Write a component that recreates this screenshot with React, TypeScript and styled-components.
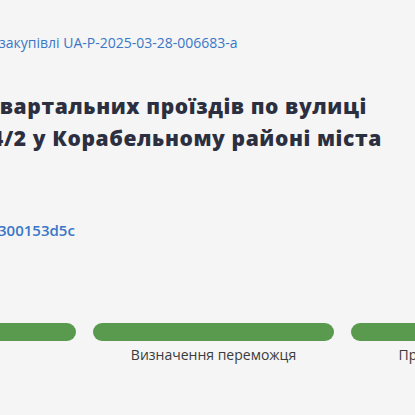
import styled, { createGlobalStyle } from "styled-components";

const GlobalStyle = createGlobalStyle`
  html, body {
    margin: 0;
    padding: 0;
    background: #f5f5f5;
  }
  body {
    font-family: "Open Sans", "Noto Sans", sans-serif;
    overflow: hidden;
  }
`;

// ==================== Styled Components ====================

const Page = styled.div`
  width: 415px;
  height: 415px;
  overflow: hidden;
  background: #f5f5f5;
  display: flex;
  flex-direction: column;
  padding-top: 33px;
  box-sizing: border-box;
`;

// a line of text whose start runs past the left edge of the view
const Line = styled.div<{ $shift: number }>`
  margin-left: ${({ $shift }) => $shift}px;
  white-space: nowrap;
`;

const TenderLink = styled.a`
  font-size: 14px;
  line-height: 20px;
  font-weight: 500;
  color: #3a77c6;
  text-decoration: none;
`;

const Title = styled.h1`
  margin: 37px 0 0;
  font-size: 21px;
  line-height: 32px;
  font-weight: 800;
  letter-spacing: 0.6px;
  color: #2c2f40;
`;

const Hash = styled.a`
  margin-top: 66px;
  font-size: 15px;
  line-height: 20px;
  font-weight: 600;
  color: #3a77c6;
  text-decoration: none;
`;

const Stepper = styled.div`
  margin-top: 83px;
  margin-left: -165px;
  display: flex;
  gap: 17px;
`;

const Step = styled.div`
  flex: 0 0 241px;
  display: flex;
  flex-direction: column;
  align-items: center;
  gap: 5px;
`;

const Bar = styled.div<{ $done?: boolean }>`
  width: 100%;
  height: 18px;
  border-radius: 9px;
  background: ${({ $done }) => ($done ? "#5a9a4f" : "#d8d8d8")};
`;

const StepLabel = styled.span`
  font-size: 14px;
  line-height: 18px;
  color: #3b3b3b;
  white-space: nowrap;
`;

// ==================== Component ====================

const steps = [
  { label: "", done: true },
  { label: "Визначення переможця", done: true },
  { label: "Пропозиції прийнято", done: true },
];

export default function App() {
  return (
    <>
      <GlobalStyle />
      <Page>
        <TenderLink href="#">
          <Line $shift={-1}>закупівлі UA-P-2025-03-28-006683-a</Line>
        </TenderLink>
        <Title>
          <Line $shift={-15}>квартальних проїздів по вулиці</Line>
          <Line $shift={-9}>4/2 у Корабельному районі міста</Line>
        </Title>
        <Hash href="#">
          <Line $shift={-2}>300153d5c</Line>
        </Hash>
        <Stepper>
          {steps.map((s, i) => (
            <Step key={i}>
              <Bar $done={s.done} />
              {s.label && <StepLabel>{s.label}</StepLabel>}
            </Step>
          ))}
        </Stepper>
      </Page>
    </>
  );
}
